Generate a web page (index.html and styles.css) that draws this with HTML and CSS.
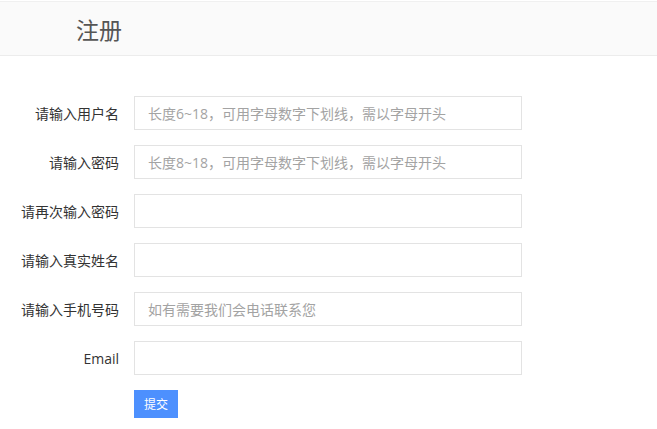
FILE: index.html
```html
<!DOCTYPE html>
<html lang="zh-CN">

<head>
    <meta charset="UTF-8">
    <title>注册</title>
    <link rel="stylesheet" href="styles.css">
</head>

<body>

    <header class="topbar">
        <h1>注册</h1>
    </header>

    <main>
        <form class="reg-form">
            <label for="username">请输入用户名</label>
            <input id="username" type="text" placeholder="长度6~18，可用字母数字下划线，需以字母开头">

            <label for="pwd">请输入密码</label>
            <input id="pwd" type="text" placeholder="长度8~18，可用字母数字下划线，需以字母开头">

            <label for="pwd2">请再次输入密码</label>
            <input id="pwd2" type="password">

            <label for="realname">请输入真实姓名</label>
            <input id="realname" type="text">

            <label for="phone">请输入手机号码</label>
            <input id="phone" type="text" placeholder="如有需要我们会电话联系您">

            <label for="email">Email</label>
            <input id="email" type="text">

            <span></span>
            <div><button type="button" class="submit">提交</button></div>
        </form>
    </main>

</body>

</html>
```

FILE: styles.css
```css
* {
    font-family: "Open Sans", "Noto Sans CJK SC", sans-serif;
    box-sizing: border-box;
}

body {
    background-color: #fff;
    margin: 0;
    color: #333;
}

.topbar {
    height: 55px;
    margin-top: 1px;
    background-color: #fafafa;
    border-top: 1px solid #f0f0f0;
    border-bottom: 1px solid #ececec;
    display: flex;
    align-items: center;
    padding-left: 76px;
}

.topbar h1 {
    margin: 0;
    font-size: 23px;
    font-weight: normal;
    color: #555;
}

.reg-form {
    margin-top: 40px;
    display: grid;
    grid-template-columns: 119px 388px;
    column-gap: 15px;
    row-gap: 15px;
    align-items: center;
}

.reg-form label {
    text-align: right;
    font-size: 14px;
    color: #333;
}

.reg-form input {
    height: 34px;
    border: 1px solid #e3e3e3;
    padding: 0 13px;
    font-size: 14px;
    color: #333;
    outline: none;
}

.reg-form input::placeholder {
    color: #a3a3a3;
}

.submit {
    background-color: #4d90fe;
    color: #fff;
    border: none;
    height: 28px;
    width: 44px;
    font-size: 12px;
    padding: 0;
    cursor: pointer;
}
```
